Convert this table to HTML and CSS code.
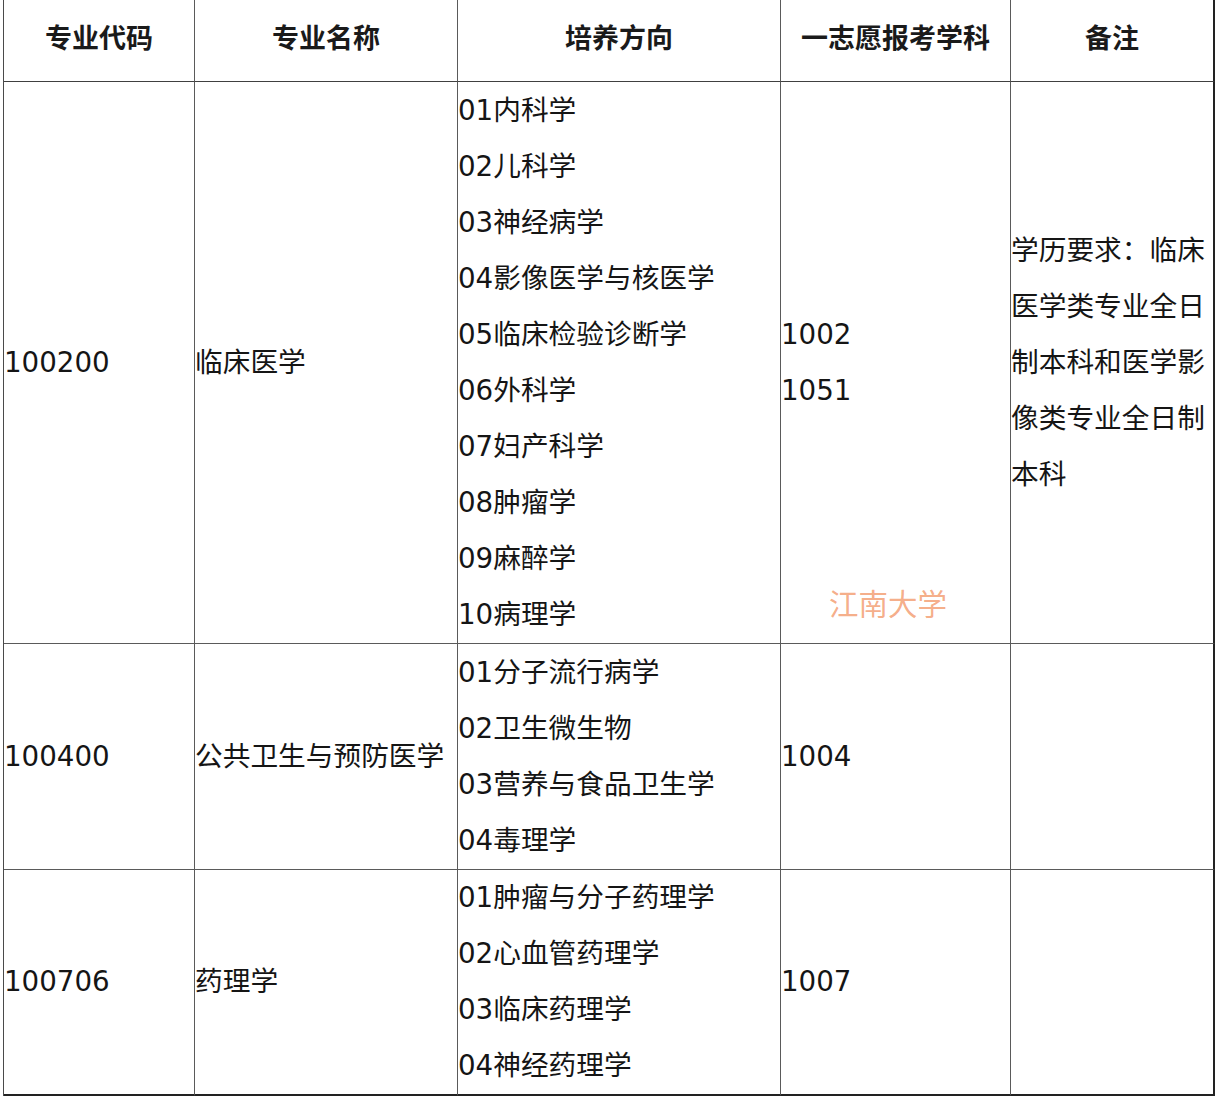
FILE: index.html
```html
<!DOCTYPE html>
<html lang="zh-CN">
<head>
<meta charset="utf-8">
<title>专业目录</title>
<link rel="stylesheet" href="styles.css">
</head>
<body>
<div class="wrap">
<table class="grid">
  <colgroup>
    <col class="c1"><col class="c2"><col class="c3"><col class="c4"><col class="c5">
  </colgroup>
  <thead>
    <tr class="head">
      <th>专业代码</th>
      <th>专业名称</th>
      <th>培养方向</th>
      <th>一志愿报考学科</th>
      <th>备注</th>
    </tr>
  </thead>
  <tbody>
    <tr class="r1">
      <td>100200</td>
      <td>临床医学</td>
      <td>01内科学<br>02儿科学<br>03神经病学<br>04影像医学与核医学<br>05临床检验诊断学<br>06外科学<br>07妇产科学<br>08肿瘤学<br>09麻醉学<br>10病理学</td>
      <td class="mark-cell">1002<br>1051<span class="mark">江南大学</span></td>
      <td>学历要求：临床医学类专业全日制本科和医学影像类专业全日制本科</td>
    </tr>
    <tr class="r2">
      <td>100400</td>
      <td>公共卫生与预防医学</td>
      <td>01分子流行病学<br>02卫生微生物<br>03营养与食品卫生学<br>04毒理学</td>
      <td>1004</td>
      <td></td>
    </tr>
    <tr class="r3">
      <td>100706</td>
      <td>药理学</td>
      <td>01肿瘤与分子药理学<br>02心血管药理学<br>03临床药理学<br>04神经药理学</td>
      <td>1007</td>
      <td></td>
    </tr>
  </tbody>
</table>
</div>
</body>
</html>
```

FILE: styles.css
```css
html, body {
  margin: 0;
  padding: 0;
  background: #ffffff;
}

.wrap {
  padding-left: 3px;
}

.grid {
  table-layout: fixed;
  border-collapse: separate;
  border-spacing: 0;
  width: 1212px;
  border-left: 1px solid #4a4a4a;
  font-family: "DejaVu Sans", "Noto Sans CJK SC", sans-serif;
  font-size: 27.7px;
  color: #151515;
}

.c1 { width: 191px; }
.c2 { width: 263px; }
.c3 { width: 323px; }
.c4 { width: 230px; }
.c5 { width: 204px; }

.grid th,
.grid td {
  border-right: 1px solid #5a5a5a;
  border-bottom: 1px solid #5a5a5a;
  padding: 0;
  vertical-align: middle;
  box-sizing: border-box;
}

.grid th:last-child,
.grid td:last-child {
  border-right: 2px solid #222222;
}

.grid tbody tr:last-child td {
  border-bottom: 2px solid #222222;
}

.head th {
  height: 82px;
  padding-bottom: 8px;
  font-family: "Noto Sans CJK SC", sans-serif;
  font-weight: 700;
  font-size: 27px;
  text-align: center;
  color: #1a1a1a;
  border-bottom-color: #404040;
}

.grid td {
  text-align: left;
  line-height: 56px;
  word-break: break-all;
}

.r1 td { height: 562px; }
.r2 td { height: 226px; }
.r3 td { height: 226px; }

.mark-cell {
  position: relative;
}

.mark {
  position: absolute;
  left: 48px;
  top: 504px;
  line-height: 32px;
  font-family: "Noto Sans CJK SC", sans-serif;
  font-size: 29.5px;
  font-weight: 400;
  color: rgba(240, 128, 70, 0.65);
  white-space: nowrap;
}
```
